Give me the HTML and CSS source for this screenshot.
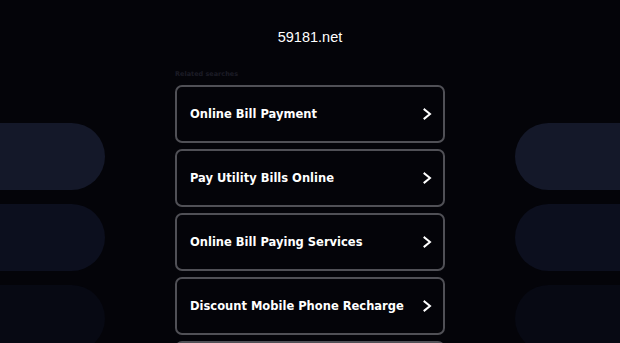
FILE: index.html
```html
<!DOCTYPE html>
<html lang="en">
<head>
<meta charset="utf-8">
<title>59181.net</title>
<link rel="stylesheet" href="styles.css">
</head>
<body>
<div class="page">
  <aside class="side side-left">
    <div class="pill pill-1"></div>
    <div class="pill pill-2"></div>
    <div class="pill pill-3"></div>
  </aside>
  <main class="center">
    <h1 class="domain">59181.net</h1>
    <div class="related">Related searches</div>
    <ul class="links">
      <li><a class="card" href="#"><span>Online Bill Payment</span><svg class="chev" viewBox="0 0 10 12" width="10" height="12"><path d="M2.5 1.5 L8 6 L2.5 10.5" fill="none" stroke="#fff" stroke-width="2" stroke-linecap="square"/></svg></a></li>
      <li><a class="card" href="#"><span>Pay Utility Bills Online</span><svg class="chev" viewBox="0 0 10 12" width="10" height="12"><path d="M2.5 1.5 L8 6 L2.5 10.5" fill="none" stroke="#fff" stroke-width="2" stroke-linecap="square"/></svg></a></li>
      <li><a class="card" href="#"><span>Online Bill Paying Services</span><svg class="chev" viewBox="0 0 10 12" width="10" height="12"><path d="M2.5 1.5 L8 6 L2.5 10.5" fill="none" stroke="#fff" stroke-width="2" stroke-linecap="square"/></svg></a></li>
      <li><a class="card" href="#"><span>Discount Mobile Phone Recharge</span><svg class="chev" viewBox="0 0 10 12" width="10" height="12"><path d="M2.5 1.5 L8 6 L2.5 10.5" fill="none" stroke="#fff" stroke-width="2" stroke-linecap="square"/></svg></a></li>
      <li><a class="card" href="#"><span>Prepaid Mobile Recharge</span><svg class="chev" viewBox="0 0 10 12" width="10" height="12"><path d="M2.5 1.5 L8 6 L2.5 10.5" fill="none" stroke="#fff" stroke-width="2" stroke-linecap="square"/></svg></a></li>
    </ul>
  </main>
  <aside class="side side-right">
    <div class="pill pill-1"></div>
    <div class="pill pill-2"></div>
    <div class="pill pill-3"></div>
  </aside>
</div>
</body>
</html>
```

FILE: styles.css
```css
html, body {
  margin: 0;
  padding: 0;
  height: 100%;
  overflow: hidden;
  background: #040409;
}

.page {
  display: grid;
  grid-template-columns: 105px 1fr 105px;
  height: 343px;
  overflow: hidden;
}

.side {
  display: flex;
  flex-direction: column;
  gap: 14px;
  padding-top: 123px;
}

.pill {
  height: 67px;
  flex: none;
}

.side-left .pill {
  border-radius: 0 34px 34px 0;
}

.side-right .pill {
  border-radius: 34px 0 0 34px;
}

.pill-1 { background: #141829; }
.pill-2 { background: #0c0f1e; }
.pill-3 { background: #070913; }

.center {
  display: flex;
  flex-direction: column;
  align-items: center;
  padding-top: 28px;
}

.domain {
  margin: 0;
  font-family: "Liberation Sans", Arial, sans-serif;
  font-weight: normal;
  font-size: 14.5px;
  line-height: 18px;
  color: #ffffff;
}

.related {
  width: 270px;
  margin-top: 24px;
  font-family: "DejaVu Sans", sans-serif;
  font-weight: bold;
  font-size: 6.5px;
  line-height: 8px;
  color: #1c1c26;
}

.links {
  list-style: none;
  margin: 7px 0 0;
  padding: 0;
  width: 270px;
  display: flex;
  flex-direction: column;
  gap: 6px;
}

.card {
  box-sizing: border-box;
  height: 58px;
  display: flex;
  align-items: center;
  justify-content: space-between;
  padding: 0 11px 0 13px;
  border: 2px solid #505056;
  border-radius: 7px;
  text-decoration: none;
  color: #ffffff;
  font-family: "DejaVu Sans", sans-serif;
  font-weight: bold;
  font-size: 11.5px;
  letter-spacing: 0;
}

.chev {
  flex: none;
}
```
